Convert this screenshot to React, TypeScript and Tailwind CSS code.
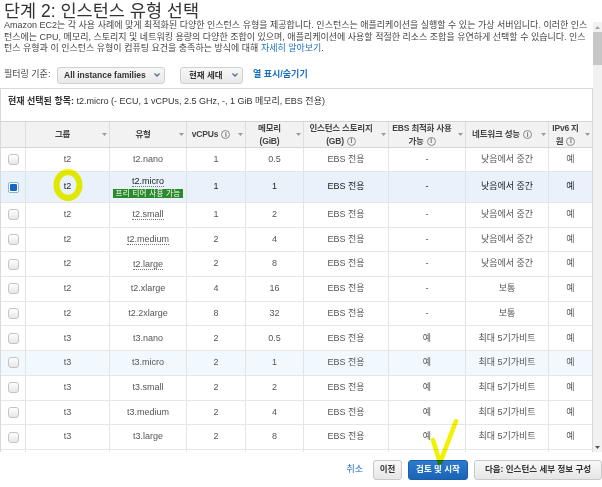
// EC2 인스턴스 유형 선택 화면 (2단계)
const cols = [
  "w-[24px]",
  "w-[84px]",
  "w-[77px]",
  "w-[59px]",
  "w-[58px]",
  "w-[85px]",
  "w-[77px]",
  "w-[83px]",
  "w-[44px]",
];

interface Row {
  family: string;
  type: string;
  vcpu: number;
  mem: string;
  ebs: string;
  net: string;
  dotted?: boolean;
}

const rows: Row[] = [
  { family: "t2", type: "t2.nano", vcpu: 1, mem: "0.5", ebs: "-", net: "낮음에서 중간" },
  { family: "t2", type: "t2.micro", vcpu: 1, mem: "1", ebs: "-", net: "낮음에서 중간", dotted: true },
  { family: "t2", type: "t2.small", vcpu: 1, mem: "2", ebs: "-", net: "낮음에서 중간", dotted: true },
  { family: "t2", type: "t2.medium", vcpu: 2, mem: "4", ebs: "-", net: "낮음에서 중간", dotted: true },
  { family: "t2", type: "t2.large", vcpu: 2, mem: "8", ebs: "-", net: "낮음에서 중간", dotted: true },
  { family: "t2", type: "t2.xlarge", vcpu: 4, mem: "16", ebs: "-", net: "보통" },
  { family: "t2", type: "t2.2xlarge", vcpu: 8, mem: "32", ebs: "-", net: "보통" },
  { family: "t3", type: "t3.nano", vcpu: 2, mem: "0.5", ebs: "예", net: "최대 5기가비트" },
  { family: "t3", type: "t3.micro", vcpu: 2, mem: "1", ebs: "예", net: "최대 5기가비트" },
  { family: "t3", type: "t3.small", vcpu: 2, mem: "2", ebs: "예", net: "최대 5기가비트" },
  { family: "t3", type: "t3.medium", vcpu: 2, mem: "4", ebs: "예", net: "최대 5기가비트" },
  { family: "t3", type: "t3.large", vcpu: 2, mem: "8", ebs: "예", net: "최대 5기가비트" },
];

function Info() {
  return (
    <span className="inline-flex items-center justify-center w-[9px] h-[9px] rounded-full border border-[#8a8a8a] text-[6.5px] leading-none text-[#666] font-bold ml-[3px] align-middle">
      i
    </span>
  );
}

function Caret() {
  return (
    <svg width="5" height="3" viewBox="0 0 5 3">
      <path d="M0 0h5L2.5 3z" fill="#9a9a9a" />
    </svg>
  );
}

function Chevron() {
  return (
    <svg width="6" height="4" viewBox="0 0 6 4" className="ml-auto mr-[4px]">
      <path d="M0.5 0.5L3 3L5.5 0.5" fill="none" stroke="#4d6e9c" strokeWidth="1.3" />
    </svg>
  );
}

function Check({ on }: { on?: boolean }) {
  if (on)
    return (
      <span className="w-[11px] h-[11px] rounded-[2px] border border-[#8fb2dc] bg-white flex items-center justify-center">
        <span className="w-[7px] h-[7px] rounded-[1px] bg-[#1565c4]" />
      </span>
    );
  return (
    <span className="w-[11px] h-[11px] rounded-[3px] border border-[#c4c4c4] bg-gradient-to-b from-[#ffffff] to-[#e6e6e6]" />
  );
}

function HeadCell({ i, children }: { i: number; children?: React.ReactNode }) {
  return (
    <div
      className={`${cols[i]} shrink-0 h-full flex items-center ${i > 0 ? "border-l border-[#dedede]" : ""}`}
    >
      {i > 0 && (
        <>
          <div className="flex-1 text-center leading-[13px] whitespace-nowrap">{children}</div>
          <div className="w-[10px] flex justify-center">
            <Caret />
          </div>
        </>
      )}
    </div>
  );
}

export default function App() {
  return (
    <div className="relative w-[602px] h-[487px] bg-white overflow-hidden flex flex-col font-['Liberation_Sans','Noto_Sans_CJK_KR',sans-serif] text-[#444]">
      <h1 className="h-[20px] pt-[3px] pl-[4px] text-[17.5px] leading-[17px] text-[#333] whitespace-nowrap">
        단계 2: 인스턴스 유형 선택
      </h1>

      <div className="flex h-[432px]">
        <div className="w-[593px] overflow-hidden">
          <div className="pl-[4px] text-[9px] leading-[11.5px] text-[#444] whitespace-nowrap">
            <div>
              Amazon EC2는 각 사용 사례에 맞게 최적화된 다양한 인스턴스 유형을 제공합니다. 인스턴스는 애플리케이션을 실행할 수 있는 가상 서버입니다. 이러한 인스
            </div>
            <div>
              턴스에는 CPU, 메모리, 스토리지 및 네트워킹 용량의 다양한 조합이 있으며, 애플리케이션에 사용할 적절한 리소스 조합을 유연하게 선택할 수 있습니다. 인스
            </div>
            <div>
              턴스 유형과 이 인스턴스 유형이 컴퓨팅 요건을 충족하는 방식에 대해{" "}
              <span className="text-[#1a6ec2]">자세히 알아보기</span>.
            </div>
          </div>

          <div className="mt-[12px] h-[17px] flex items-center pl-[4px] text-[9px] whitespace-nowrap">
            <span className="w-[53px] text-[#444]">필터링 기준:</span>
            <div className="w-[108px] h-[17px] rounded-[3px] border border-[#d0d0d0] bg-gradient-to-b from-[#f7f7f7] to-[#e9e9e9] flex items-center pl-[6px] text-[8.5px] font-bold text-[#333]">
              All instance families
              <Chevron />
            </div>
            <div className="ml-[15px] w-[63px] h-[17px] rounded-[3px] border border-[#d0d0d0] bg-gradient-to-b from-[#f7f7f7] to-[#e9e9e9] flex items-center pl-[8px] text-[8.5px] font-bold text-[#333]">
              현재 세대
              <Chevron />
            </div>
            <span className="ml-[10px] font-bold text-[#1a6ec2]">열 표시/숨기기</span>
          </div>

          <div className="mt-[4.5px] w-[593px] border-l border-r border-t border-[#d9d9d9] text-[9px]">
            <div className="h-[32px] pl-[7px] pt-[6px] leading-[12px] text-[#333] whitespace-nowrap">
              <span className="font-bold">현재 선택된 항목:</span> t2.micro (- ECU, 1 vCPUs, 2.5 GHz, -, 1 GiB 메모리, EBS 전용)
            </div>

            <div className="h-[27px] flex border-t border-b border-[#d6d6d6] bg-[#f2f2f2] font-bold text-[8.5px] tracking-[-0.2px] text-[#444]">
              <HeadCell i={0} />
              <HeadCell i={1}>그룹</HeadCell>
              <HeadCell i={2}>유형</HeadCell>
              <HeadCell i={3}>
                vCPUs
                <Info />
              </HeadCell>
              <HeadCell i={4}>
                메모리
                <br />
                (GiB)
              </HeadCell>
              <HeadCell i={5}>
                인스턴스 스토리지
                <br />
                (GB)
                <Info />
              </HeadCell>
              <HeadCell i={6}>
                EBS 최적화 사용
                <br />
                가능
                <Info />
              </HeadCell>
              <HeadCell i={7}>
                네트워크 성능
                <Info />
              </HeadCell>
              <HeadCell i={8}>
                IPv6 지
                <br />원
                <Info />
              </HeadCell>
            </div>

            {rows.map((r, idx) => {
              const selected = r.type === "t2.micro";
              const hover = r.type === "t3.micro";
              const h = idx === 0 ? "h-[24px]" : selected ? "h-[31px]" : "h-[24.7px]";
              const bg = selected ? "bg-[#e9f2fb]" : hover ? "bg-[#f1f8fe]" : "bg-white";
              const txt = selected ? "text-[#222]" : "text-[#555]";
              const cells = [
                <Check on={selected} />,
                <span>{r.family}</span>,
                <div className="flex flex-col items-center">
                  <span className={r.dotted ? "border-b border-dotted border-[#777] leading-[10px]" : ""}>
                    {r.type}
                  </span>
                  {selected && (
                    <span className="mt-[2px] w-[70px] h-[9px] bg-[#2b8a2b] text-white text-[7.5px] leading-[9px] text-center tracking-[0.3px]">
                      프리 티어 사용 가능
                    </span>
                  )}
                </div>,
                <span>{r.vcpu}</span>,
                <span>{r.mem}</span>,
                <span>EBS 전용</span>,
                <span>{r.ebs}</span>,
                <span>{r.net}</span>,
                <span>예</span>,
              ];
              return (
                <div key={r.type} className={`${h} flex border-b border-[#e6e6e6] ${bg} ${txt}`}>
                  {cells.map((c, i) => (
                    <div
                      key={i}
                      className={`${cols[i]} shrink-0 flex items-center justify-center whitespace-nowrap ${i > 0 ? "border-l border-[#e3e3e3]" : ""}`}
                    >
                      {c}
                    </div>
                  ))}
                </div>
              );
            })}

            {/* 스크롤로 잘린 다음 행 */}
            <div className="h-[24.7px] flex">
              {cols.map((c, i) => (
                <div key={i} className={`${c} shrink-0 ${i > 0 ? "border-l border-[#e3e3e3]" : ""}`} />
              ))}
            </div>
          </div>
        </div>

        {/* 스크롤바 */}
        <div className="w-[9px] mt-[2px] bg-[#f1f1f1] flex flex-col">
          <div className="h-[10px] flex items-center justify-center">
            <svg width="5" height="3" viewBox="0 0 5 3">
              <path d="M0 3h5L2.5 0z" fill="#a3a3a3" />
            </svg>
          </div>
          <div className="h-[33px] bg-[#c6c6c6]" />
          <div className="flex-1" />
          <div className="h-[10px] flex items-center justify-center">
            <svg width="5" height="3" viewBox="0 0 5 3">
              <path d="M0 0h5L2.5 3z" fill="#555" />
            </svg>
          </div>
        </div>
      </div>

      <div className="h-[35px] flex items-center justify-end text-[8.5px] font-bold whitespace-nowrap">
        <span className="text-[#1a6ec2] font-normal text-[9px]">취소</span>
        <button className="ml-[10px] w-[29px] h-[20px] rounded-[3px] border border-[#c9c9c9] bg-gradient-to-b from-[#f8f8f8] to-[#e6e6e6] text-[#333]">
          이전
        </button>
        <button className="ml-[6px] w-[60px] h-[20px] rounded-[3px] border border-[#1b5fa8] bg-gradient-to-b from-[#2c7bd0] to-[#1b64b5] text-white">
          검토 및 시작
        </button>
        <button className="ml-[6px] w-[128px] h-[20px] rounded-[3px] border border-[#c9c9c9] bg-gradient-to-b from-[#f8f8f8] to-[#e6e6e6] text-[#333]">
          다음: 인스턴스 세부 정보 구성
        </button>
      </div>

      {/* 형광펜 표시 */}
      <svg
        className="absolute inset-0 pointer-events-none mix-blend-multiply"
        width="602"
        height="487"
        viewBox="0 0 602 487"
      >
        <ellipse cx="68" cy="185" rx="11.5" ry="13" fill="none" stroke="#f5f500" strokeWidth="6" />
        <path
          d="M433 440L440 463L456 421"
          fill="none"
          stroke="#f2f200"
          strokeWidth="4.5"
          strokeLinecap="round"
          strokeLinejoin="round"
        />
      </svg>
    </div>
  );
}
